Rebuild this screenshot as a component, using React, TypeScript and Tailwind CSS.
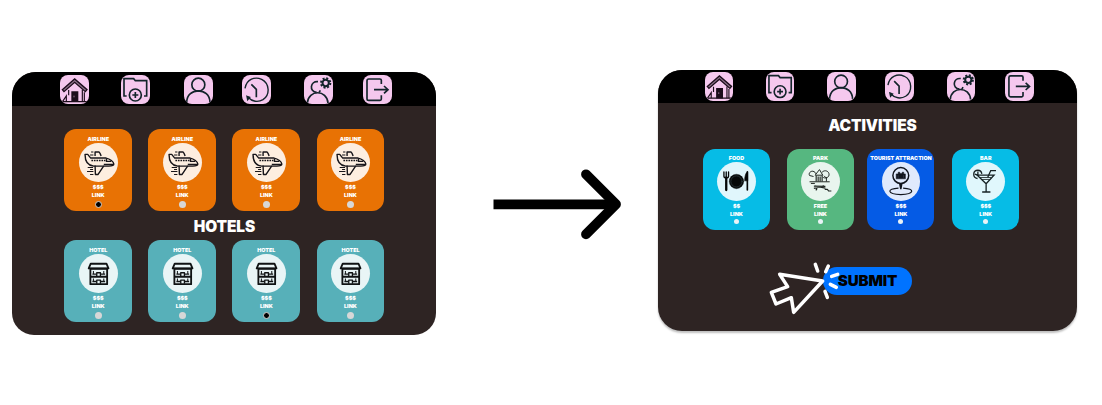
import React from "react";

const tileClass = "shrink-0 rounded-[8px] bg-[#f5c8ee] overflow-hidden";
const ink = "#13242b";

function Tile({ className, children }: { className: string; children: React.ReactNode }) {
  return (
    <div className={`${tileClass} ${className}`}>
      <svg viewBox="0 0 87 87" className="block size-full" fill="none" stroke={ink} strokeWidth="5">
        {children}
      </svg>
    </div>
  );
}

function NavIcons({ size }: { size: string }) {
  return (
    <>
      <Tile className={size}>
        <g stroke="#1c0d1b" strokeWidth="4">
          <path d="M7 44 44 12l37 32-5 6-32-28-32 28z" fill="#8d6f89" />
          <path d="M26 45v16M73 52v28M67 44v36" strokeWidth="3.5" />
          <path d="M7 80h76" />
          <path d="m8 79 11-16v17" strokeWidth="3.5" />
          <path d="M36 51h17v28H36z" fill="#1c0d1b" />
          <path d="M42 62v5" stroke="#d3a9cc" strokeWidth="2" />
        </g>
      </Tile>
      <Tile className={`ml-[32.5px] ${size}`}>
        <path d="M17 63H9V11h29l5 6h34v46h-8" />
        <circle cx="43" cy="60" r="18" />
        <path d="M43 51v18M34 60h18" />
      </Tile>
      <Tile className={`ml-[33.2px] ${size}`}>
        <circle cx="43" cy="29" r="19.5" />
        <path d="M8 82c1-46 69-46 70 0" />
      </Tile>
      <Tile className={`ml-[29.5px] ${size}`}>
        <g strokeWidth="4.2">
          <path d="M9 40C14 12 39 4 59 13c24 12 26 47 4 61-15 9-33 6-45-7" />
          <path d="m28 28 15 15v24" strokeWidth="5" />
          <path d="m15 64 8 3-6 7z" fill={ink} />
        </g>
      </Tile>
      <Tile className={`ml-[33px] ${size}`}>
        <path d="M42 20c-23-3-28 30-4 32M49 46l-4 7" />
        <path d="M10 84c3-41 59-41 62 0" />
        <circle cx="65" cy="24" r="9.5" strokeWidth="6" />
        <circle cx="65" cy="24" r="14" strokeDasharray="6 4.99" strokeWidth="6" />
      </Tile>
      <Tile className={`ml-[29.8px] ${size}`}>
        <path d="M55 27V16q0-4-4-4H17q-5 0-5 5v54q0 5 5 5h34q4 0 4-4V61" />
        <path d="M33 44h41M63 33l12 11-12 11" />
      </Tile>
    </>
  );
}

const PlaneIcon = () => (
  <g stroke="#17151a" strokeWidth="4.2" strokeLinejoin="round">
    <path d="M18 34h8l9 11h46c11 2 23 11 23 18 0 5-7 6-15 6H44C26 67 18 52 18 34z" />
    <path d="M37 52h42" strokeDasharray="5 2.5" strokeWidth="4.5" />
    <path d="M82 46v9h14M74 64h28" />
    <path d="M48 39V27h11q3 0 7 12M48 67l1 27h8l17-26" />
    <path d="M36 27h7M33 36h10M26 73h16M33 79h9M24 85h19M33 94h10" strokeWidth="3.2" />
  </g>
);

const HotelIcon = () => (
  <g stroke="#101314" strokeWidth="5.5" strokeLinejoin="round">
    <path d="M35 29h47l6 14H29z" />
    <path d="M34 44h50v46H34zM34 68h50" />
    <path d="M43 51v9M74 51v9M43 73v9M74 73v9" strokeWidth="3" />
    <path d="M40 60h12M65 60h13M40 82h12M65 82h13" strokeWidth="4" />
    <path d="M53 67V56h11v11M53 89V78h11v11" strokeWidth="4" />
  </g>
);

const FoodIcon = () => (
  <g stroke="#050808" strokeLinecap="round">
    <path d="M21 30v13q0 5 7 5t7-5V30M28 30v17" strokeWidth="4" />
    <path d="M28 47v38" strokeWidth="7" />
    <circle cx="59" cy="59" r="22" fill="#050808" strokeWidth="1" />
    <circle cx="59" cy="59" r="17" stroke="#41565c" strokeWidth="1.5" />
    <path d="M92 30q-8 4-8 27h8z" fill="#050808" strokeWidth="2" />
    <path d="M92 30v55" strokeWidth="5" />
  </g>
);

const ParkIcon = () => (
  <g stroke="#202722" strokeWidth="3" strokeLinejoin="round">
    <path d="M26 41c-4-7 3-14 10-13 5 1 9 5 9 8M26 41l12 3M45 37l11-14 10 17H43z" />
    <path d="M64 31c8-9 22-3 21 8-1 9-12 12-19 7M77 46v13M70 42l7 7" />
    <path d="M46 41v18M64 41v18M52 59V44M58 44v15" strokeWidth="3.5" />
    <path d="M26 60h61M30 65h12" />
    <path d="m39 80 31-8M43 73l31 6M39 73l35 1M49 80l-4 6M72 83h8l4 5h8" strokeWidth="3.5" />
  </g>
);

const TouristIcon = () => (
  <g stroke="#11151d" strokeWidth="4.5">
    <circle cx="57" cy="41" r="24" />
    <path d="M43 51V36h6v-5h5v4h7v-4h5v5h5v15z" fill="#11151d" strokeWidth="1.5" />
    <path d="M49 40v8M65 40v8" stroke="#555d72" strokeWidth="1.2" />
    <path d="m54 66 3 16 3-16z" fill="#11151d" />
    <path d="M50 79c-37 2-35 19 7 20 42-1 44-18 7-20" strokeWidth="3.5" />
  </g>
);

const BarIcon = () => (
  <g stroke="#172325" strokeWidth="4">
    <path d="M34 40h51L61 66zM61 65v26M49 91h25" />
    <path d="M42 47h35M48 53h24" strokeWidth="2.5" />
    <path d="M35 50c-16-2-15-25 1-25 7 0 11 5 12 11M36 29v11M27 37l9 3" />
    <path d="m66 46 9-20h16" />
  </g>
);

type CardProps = {
  title: string;
  price: string;
  color: string;
  disc: string;
  icon: React.ReactNode;
  on?: boolean;
  small?: boolean;
};

function Card({ title, price, color, disc, icon, on, small }: CardProps) {
  return (
    <div
      className={`flex shrink-0 flex-col items-center rounded-[12px] text-[5.4px] font-black leading-[8px] text-white ${
        small ? "h-[80.5px] w-[67px] pt-[5.3px]" : "h-[81.5px] w-[67.8px] pt-[6px]"
      } ${color}`}
    >
      <div className="h-[8px] whitespace-nowrap">{title}</div>
      <div className={`shrink-0 rounded-full ${small ? "size-[38.6px]" : "size-[39.2px]"} ${disc}`}>
        <svg viewBox="0 0 117 117" className="block size-full" fill="none">{icon}</svg>
      </div>
      <div className="mt-[0.8px] h-[7.8px]">{price}</div>
      <div className="h-[8px]">LINK</div>
      {small ? (
        <div className="mt-[1.3px] size-[5px] shrink-0 rounded-full bg-[#e9f3f6]" />
      ) : (
        <div
          className={`mt-[1.8px] size-[7px] shrink-0 rounded-full ${
            on ? "border border-[#d2cfcb] bg-black" : "bg-[#d7d7d7]"
          }`}
        />
      )}
    </div>
  );
}

function Row({ kind, selected }: { kind: "AIRLINE" | "HOTEL"; selected: number }) {
  const air = kind === "AIRLINE";
  return (
    <div className="flex gap-[16.3px] pl-[52px]">
      {[0, 1, 2, 3].map((i) => (
        <Card
          key={i}
          title={kind}
          price="$$$"
          color={air ? "bg-[#e87204]" : "bg-[#57b0b9]"}
          disc={air ? "bg-[#fdeee0]" : "bg-[#e9f5f6]"}
          icon={air ? <PlaneIcon /> : <HotelIcon />}
          on={i === selected}
        />
      ))}
    </div>
  );
}

const heading = "text-center text-[15.4px] font-black leading-[20px] tracking-[-0.1px] text-white";

export default function App() {
  return (
    <main className="flex h-[405px] w-[1102px] items-start overflow-hidden bg-white font-['Inter',sans-serif]">
      <section className="ml-[12.3px] mt-[72.3px] h-[262.7px] w-[424.2px] shrink-0 overflow-hidden rounded-t-[24px] rounded-b-[22px] bg-[#2e2423]">
        <nav className="flex h-[33.7px] bg-black pl-[47.7px] pt-[2.3px]">
          <NavIcons size="size-[29px]" />
        </nav>
        <div className="pt-[23.3px]">
          <Row kind="AIRLINE" selected={0} />
        </div>
        <h2 className={`${heading} mb-[3.3px] mt-[6.2px]`}>HOTELS</h2>
        <Row kind="HOTEL" selected={2} />
      </section>

      <svg viewBox="0 0 130 72" className="ml-[56.8px] mt-[168px] block h-[72px] w-[130px] shrink-0" fill="none" stroke="#000">
        <path d="M.5 36.3H122" strokeWidth="9.8" />
        <path d="m93 6.3 30 30-30 30" strokeWidth="9.8" strokeLinecap="round" strokeLinejoin="round" />
      </svg>

      <section className="ml-[34.7px] mt-[69.8px] h-[261px] w-[419.5px] shrink-0 overflow-hidden rounded-[24px] bg-[#2e2423] shadow-[0_2px_2px_rgba(0,0,0,0.25)]">
        <nav className="flex h-[32.8px] bg-black pl-[46.6px] pt-[2.3px]">
          <NavIcons size="size-[28.5px]" />
        </nav>
        <h2 className={`${heading} ml-[9.5px] mt-[13.2px]`}>ACTIVITIES</h2>
        <div className="mt-[13.4px] flex pl-[45px]">
          <Card small title="FOOD" price="$$" color="bg-[#06bce6]" disc="bg-[#e0f6fc]" icon={<FoodIcon />} />
          <div className="ml-[17px]">
            <Card small title="PARK" price="FREE" color="bg-[#56b780]" disc="bg-[#e9f5ee]" icon={<ParkIcon />} />
          </div>
          <div className="ml-[13.5px]">
            <Card small title="TOURIST ATTRACTION" price="$$$" color="bg-[#055be5]" disc="bg-[#e0eafc]" icon={<TouristIcon />} />
          </div>
          <div className="ml-[17.8px]">
            <Card small title="BAR" price="$$$" color="bg-[#06bce6]" disc="bg-[#e0f7fc]" icon={<BarIcon />} />
          </div>
        </div>
        <div className="relative ml-[165.3px] mt-[37.8px] h-[27.6px] w-[88.6px]">
          <button className="h-full w-full rounded-full bg-[#0073ff] text-center text-[15.1px] font-black leading-[28.4px] tracking-[-0.1px] text-black">
            SUBMIT
          </button>
          <svg
            viewBox="354 30 222 168"
            className="absolute left-[-55.5px] top-[-7.5px] h-[56px] w-[74px]"
            fill="none"
            stroke="#fff"
            strokeWidth="10.5"
            strokeLinecap="round"
            strokeLinejoin="round"
          >
            <path d="m389 73 129 20-87 94-7-44-46 19-14-35 49-17z" />
            <path d="m496 43 7 20M535 48l-8 17M545 79l18-6M541 103l18 9M525 124l7 18" />
          </svg>
        </div>
      </section>
    </main>
  );
}
